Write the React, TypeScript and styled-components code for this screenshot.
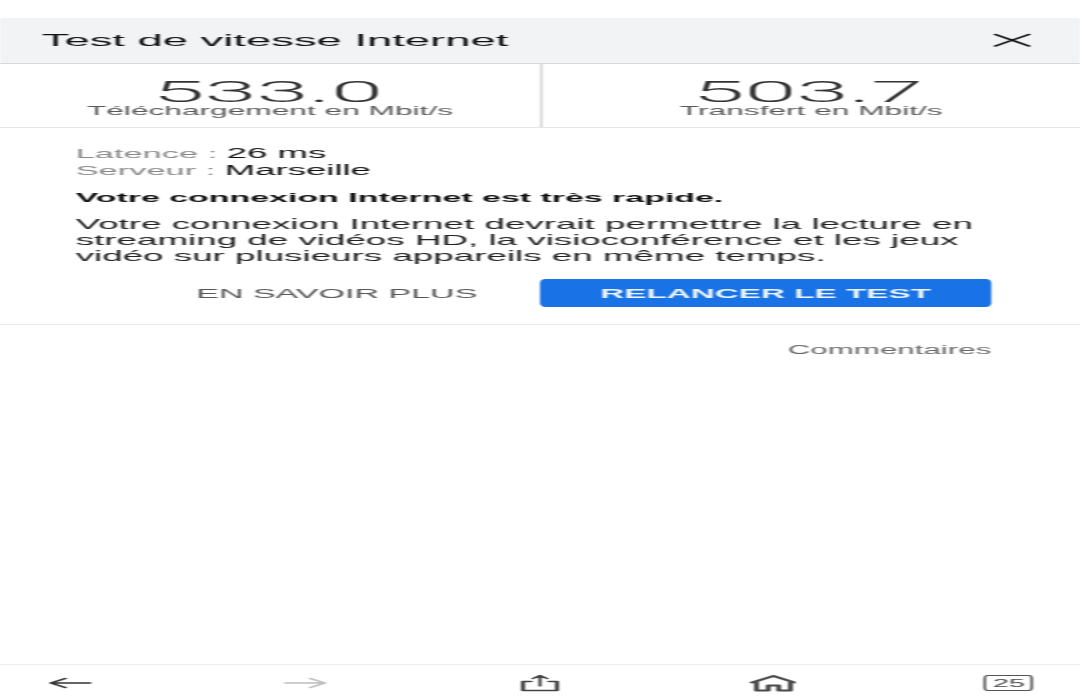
import React from "react";
import styled, { createGlobalStyle } from "styled-components";

const Global = createGlobalStyle`
  html, body { margin: 0; padding: 0; background: #fff; overflow: hidden; }
  #root { width: 1080px; height: 700px; overflow: hidden; }
`;

/* The reference is a 414px wide phone page stretched sideways to 1080px, and soft from rescaling. */
const Screen = styled.div`
  width: 414px;
  height: 700px;
  transform: scaleX(2.6087);
  transform-origin: 0 0;
  filter: blur(0.35px);
  display: flex;
  flex-direction: column;
  padding-top: 18px;
  box-sizing: border-box;
  background: #fff;
  font-family: "Liberation Sans", Arial, sans-serif;
  color: #1c1c1e;
`;

const Header = styled.header`
  height: 46px;
  flex: none;
  display: flex;
  align-items: center;
  justify-content: space-between;
  padding: 0 17px 2px 16px;
  box-sizing: border-box;
  background: #f1f3f4;
  border-bottom: 1px solid #d6d8da;
`;

const Title = styled.h1`
  margin: 2px 0 0;
  font-size: 17.4px;
  font-weight: 400;
  color: #111;
`;

const Stats = styled.section`
  height: 64px;
  flex: none;
  display: grid;
  grid-template-columns: 207px 1fr;
  box-sizing: border-box;
  border-bottom: 1px solid #e4e5e6;
`;

const Stat = styled.div<{ $divided?: boolean }>`
  display: flex;
  flex-direction: column;
  align-items: center;
  box-sizing: border-box;
  padding-top: 16px;
  ${(p) => (p.$divided ? "border-left: 1px solid #d4d5d6;" : "")}
`;

const Value = styled.div`
  font-family: Roboto, "Liberation Sans", sans-serif;
  font-weight: 300;
  font-size: 29px;
  line-height: 24px;
  margin-right: 2px;
  transform: scaleX(1.24);
  color: #333335;
`;

const Unit = styled.div`
  font-size: 12.15px;
  line-height: 12px;
  margin-top: 1px;
  color: #5a5a5c;
  white-space: nowrap;
`;

const Body = styled.section`
  padding: 17px 34px 0 29px;
  flex: none;
  height: 197px;
  box-sizing: border-box;
  border-bottom: 1px solid #e8e9ea;
`;

const Meta = styled.div`
  font-size: 14px;
  line-height: 16px;
  color: #111;
`;

const MetaKey = styled.span`
  font-size: 13.2px;
  color: #8a8a8c;
`;

const Lead = styled.p`
  margin: 11px 0 0;
  font-size: 13px;
  line-height: 16px;
  font-weight: 700;
  color: #111;
`;

const Paragraph = styled.p`
  margin: 10px 0 0;
  font-size: 14.1px;
  line-height: 16px;
  color: #222;
  white-space: pre-line;
`;

const Actions = styled.div`
  display: flex;
  justify-content: flex-end;
  align-items: center;
  gap: 24px;
  margin-top: 15px;
`;

const Ghost = styled.button`
  border: 0;
  padding: 0;
  background: none;
  font: inherit;
  font-size: 13.05px;
  color: #58585a;
  white-space: nowrap;
`;

const Primary = styled.button`
  width: 173px;
  height: 28px;
  border: 0;
  padding: 0;
  border-radius: 2px / 4px;
  background: #1a73e6;
  color: #eaf3ff;
  font: inherit;
  font-size: 12.75px;
  font-weight: 700;
`;

const Feedback = styled.div`
  padding: 17px 34px 0 0;
  text-align: right;
  font-size: 12px;
  line-height: 16px;
  color: #6a6a6c;
`;

const Spacer = styled.div`
  flex: 1;
`;

const Nav = styled.nav`
  flex: none;
  height: 36px;
  display: flex;
  justify-content: space-between;
  align-items: flex-start;
  padding: 9px 17.6px 0 18px;
  box-sizing: border-box;
  border-top: 1px solid #efefef;
`;

const Tabs = styled.div`
  width: 19.2px;
  height: 16px;
  margin-top: 1px;
  box-sizing: border-box;
  border: 1.5px solid #555;
  border-radius: 1.5px / 4px;
  display: flex;
  align-items: center;
  justify-content: center;
  font-size: 11px;
  line-height: 10px;
  color: #444;
`;

const Icon = styled.svg`
  width: 18px;
  height: 18px;
  display: block;
  fill: none;
  stroke-linecap: round;
  stroke-linejoin: round;
`;

const Close = () => (
  <Icon viewBox="0 0 18 18" stroke="#111" strokeWidth={1.4}>
    <path d="M2.6 3.4 L15.4 15 M15.4 3.4 L2.6 15" />
  </Icon>
);
const ArrowLeft = () => (
  <Icon viewBox="0 0 18 18" stroke="#333" strokeWidth={1.4}>
    <path d="M1.5 9 H16.5 M7 4.5 L1.5 9 L7 13.5" />
  </Icon>
);
const ArrowRight = () => (
  <Icon viewBox="0 0 18 18" stroke="#bdbdbd" strokeWidth={1.4}>
    <path d="M1.5 9 H16.5 M11 4.5 L16.5 9 L11 13.5" />
  </Icon>
);
const Share = () => (
  <Icon viewBox="0 0 18 18" stroke="#444" strokeWidth={1.6}>
    <path d="M5.5 7.5 H2.5 V16.5 H15.5 V7.5 H12.5" />
    <path d="M9 12 V2 M6.2 4.6 L9 1.5 L11.8 4.6" strokeWidth={1.2} />
  </Icon>
);
const Home = () => (
  <Icon viewBox="0 0 18 18" stroke="#4a4a4c" strokeWidth={1.9}>
    <path d="M1.3 8.5 L9.5 2 L17.7 8.5" />
    <path d="M3 8 V16.5 H7.5 V11.5 H11.5 V16.5 H16 V8" />
  </Icon>
);

export default function App() {
  return (
    <>
      <Global />
      <Screen>
        <Header>
          <Title>Test de vitesse Internet</Title>
          <Close />
        </Header>
        <Stats>
          <Stat>
            <Value>533.0</Value>
            <Unit>Téléchargement en Mbit/s</Unit>
          </Stat>
          <Stat $divided>
            <Value>503.7</Value>
            <Unit>Transfert en Mbit/s</Unit>
          </Stat>
        </Stats>
        <Body>
          <Meta>
            <MetaKey>Latence : </MetaKey>26 ms
          </Meta>
          <Meta>
            <MetaKey>Serveur : </MetaKey>Marseille
          </Meta>
          <Lead>Votre connexion Internet est très rapide.</Lead>
          <Paragraph>
            {"Votre connexion Internet devrait permettre la lecture en\nstreaming de vidéos HD, la visioconférence et les jeux\nvidéo sur plusieurs appareils en même temps."}
          </Paragraph>
          <Actions>
            <Ghost>EN SAVOIR PLUS</Ghost>
            <Primary>RELANCER LE TEST</Primary>
          </Actions>
        </Body>
        <Feedback>Commentaires</Feedback>
        <Spacer />
        <Nav>
          <ArrowLeft />
          <ArrowRight />
          <Share />
          <Home />
          <Tabs>25</Tabs>
        </Nav>
      </Screen>
    </>
  );
}
